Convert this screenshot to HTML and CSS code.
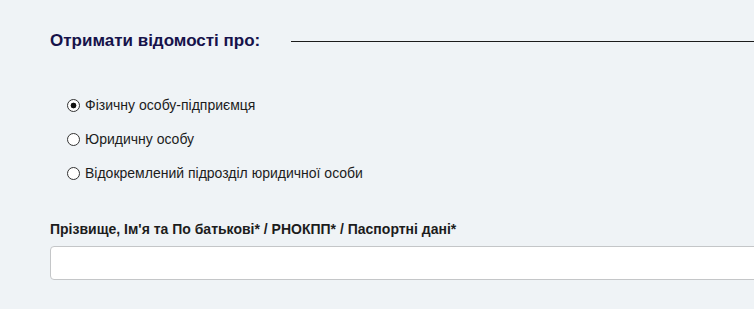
FILE: index.html
```html
<!DOCTYPE html>
<html lang="uk">

<head>
    <meta charset="UTF-8" />
    <meta name="viewport" content="width=device-width, initial-scale=1" />
    <title>Отримати відомості</title>
    <link rel="stylesheet" href="styles.css">
</head>

<body>
    <form class="request">
        <div class="section-title">
            <h2>Отримати відомості про:</h2>
            <span class="rule"></span>
        </div>

        <div class="options">
            <label class="option">
                <input type="radio" name="subject" value="fop" checked>
                <span>Фізичну особу-підприємця</span>
            </label>
            <label class="option">
                <input type="radio" name="subject" value="ul">
                <span>Юридичну особу</span>
            </label>
            <label class="option">
                <input type="radio" name="subject" value="vp">
                <span>Відокремлений підрозділ юридичної особи</span>
            </label>
        </div>

        <div class="field">
            <label for="query">Прізвище, Ім'я та По батькові* / РНОКПП* / Паспортні дані*</label>
            <input type="text" id="query" name="query">
        </div>
    </form>
</body>

</html>
```

FILE: styles.css
```css
body {
    font-family: Arial, 'Liberation Sans', sans-serif;
    background: #eff3f6;
    margin: 0;
    overflow: hidden;
}

.request {
    box-sizing: border-box;
    width: 100%;
    padding: 31px 0 0 50px;
    overflow: hidden;
}

.section-title {
    display: flex;
    align-items: center;
    gap: 31px;
}

.section-title h2 {
    margin: 0;
    font-size: 17px;
    font-weight: bold;
    color: #16124a;
    white-space: nowrap;
}

.section-title .rule {
    flex: 1;
    height: 1px;
    background: #1b1b1b;
}

.options {
    display: flex;
    flex-direction: column;
    gap: 18px;
    padding: 46px 0 0 17px;
}

.option {
    display: flex;
    align-items: center;
    gap: 5px;
    font-size: 14px;
    color: #1c1c1c;
    cursor: pointer;
}

.option input {
    appearance: none;
    margin: 0;
    width: 13px;
    height: 13px;
    border: 1px solid #333;
    border-radius: 50%;
    background: #fff;
}

.option input:checked {
    background: radial-gradient(circle, #111 0 2.6px, #fff 3.2px);
}

.field {
    padding-top: 40px;
}

.field label {
    display: block;
    font-size: 14px;
    font-weight: bold;
    color: #1c1c1c;
    margin-bottom: 9px;
}

.field input {
    display: block;
    box-sizing: border-box;
    width: calc(100% + 10px);
    height: 34px;
    border: 1px solid #c4c6c8;
    border-radius: 4px;
    background: #fff;
}
```
